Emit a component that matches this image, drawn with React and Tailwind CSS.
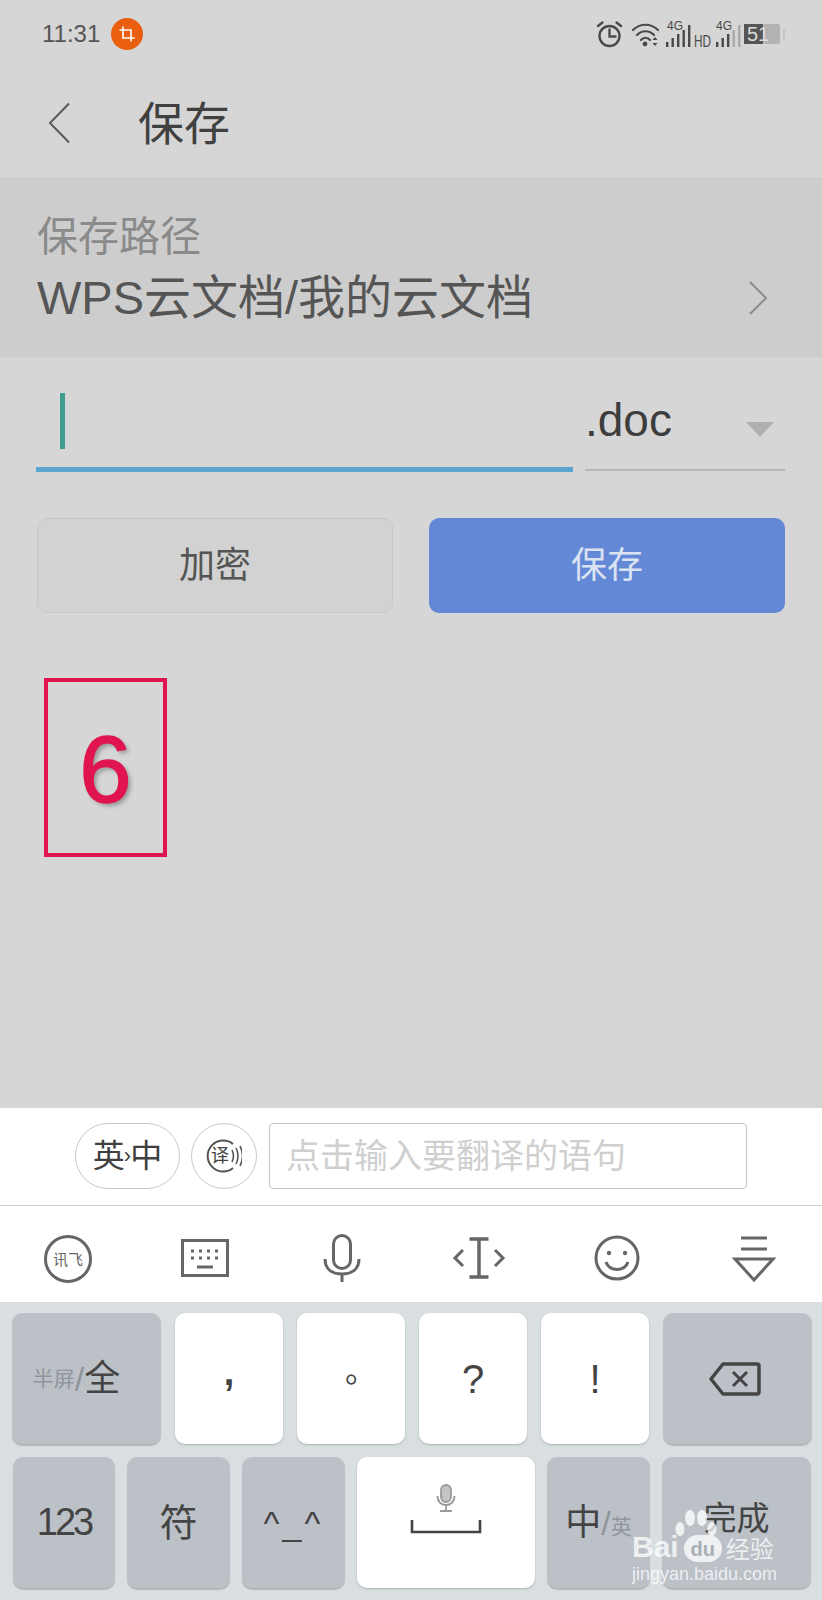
const SANS = "font-['Liberation_Sans','Noto_Sans_CJK_SC',sans-serif]";

function StatusIcons() {
  return (
    <svg width="195" height="34" viewBox="0 0 195 34" className="text-[#4a4a4a]">
      {/* alarm */}
      <g fill="none" stroke="currentColor" strokeWidth="2.4" strokeLinecap="round">
        <circle cx="14.500" cy="19" r="10" />
        <path d="M14.500 12.500v7h6" />
        <path d="M3 9l4.500-3.500M26 9l-4.500-3.500" />
      </g>
      {/* wifi */}
      <g fill="none" stroke="currentColor" strokeWidth="2.2" strokeLinecap="round">
        <path d="M38 13c7-7 18-7 25 0" />
        <path d="M42 18c5-5 12-5 17 0" />
        <path d="M46 23c2.500-3 6.500-3 9 0" />
      </g>
      <circle cx="50" cy="27" r="2.400" fill="currentColor" />
      <path d="M60 20l2.500 3h-5zM60 29l2.500-3h-5z" fill="currentColor" />
      {/* signal 1 */}
      <text x="72" y="13" fontSize="12" fill="currentColor" fontFamily="Liberation Sans">4G</text>
      <g fill="currentColor">
        <rect x="71" y="25" width="2.400" height="5" />
        <rect x="76.500" y="21" width="2.400" height="9" />
        <rect x="82" y="17" width="2.400" height="13" />
        <rect x="87.500" y="13" width="2.400" height="17" />
        <rect x="93" y="8" width="2.400" height="22" />
      </g>
      <text x="99" y="30" fontSize="16" fill="currentColor" fontFamily="Liberation Sans" textLength="17" lengthAdjust="spacingAndGlyphs">HD</text>
      {/* signal 2 */}
      <text x="121" y="13" fontSize="12" fill="currentColor" fontFamily="Liberation Sans">4G</text>
      <g fill="currentColor">
        <rect x="121" y="25" width="2.400" height="5" />
        <rect x="126.500" y="21" width="2.400" height="9" />
        <rect x="132" y="17" width="2.400" height="13" />
      </g>
      <g fill="#a9a9a9">
        <rect x="137.500" y="13" width="2.400" height="17" />
        <rect x="143" y="8" width="2.400" height="22" />
      </g>
      {/* battery */}
      <rect x="168" y="7" width="17" height="20" rx="2" fill="#b3b3b3" />
      <rect x="149" y="7" width="19" height="20" fill="#555555" />
      <rect x="188" y="12" width="2" height="10" fill="#c4c4c4" />
      <text x="152" y="24" fontSize="20" fill="#dddddd" fontFamily="Liberation Sans">51</text>
    </svg>
  );
}

function Key({ white, children, className = "" }) {
  return (
    <div
      className={`h-[131px] rounded-[10px] flex items-center justify-center text-[#444444] ${
        white
          ? "bg-white shadow-[0_1px_2px_rgba(0,0,0,0.2)]"
          : "bg-[#bbc1c7] shadow-[0_2px_1px_rgba(0,0,0,0.18)]"
      } ${className}`}
    >
      {children}
    </div>
  );
}

function ToolSlot({ children }) {
  return <div className="w-[48px] flex items-center justify-center">{children}</div>;
}

export default function App() {
  return (
    <div className={`relative w-[822px] h-[1600px] flex flex-col bg-[#d6d6d6] overflow-hidden ${SANS}`}>
      {/* status bar */}
      <div className="h-[68px] shrink-0 flex items-center pl-[42px] pr-[32px]">
        <span className="text-[24px] text-[#555555]">11:31</span>
        <div className="ml-[11px] w-[32px] h-[32px] rounded-full bg-[#ea5f0f] flex items-center justify-center">
          <svg width="16" height="16" viewBox="0 0 16 16" fill="none" stroke="#fff" strokeWidth="1.6">
            <path d="M4 0.5V12H15.5M0.5 4H12V15.5" />
          </svg>
        </div>
        <div className="ml-auto flex items-center">
          <StatusIcons />
        </div>
      </div>

      {/* title */}
      <div className="h-[110px] shrink-0 flex items-center pl-[47px] pt-[2px]">
        <svg width="24" height="42" viewBox="0 0 24 42" fill="none" stroke="#5a5a5a" strokeWidth="2" className="-mt-[3px]">
          <path d="M22 1.500L3 21L22 40.500" />
        </svg>
        <span className="ml-[67px] text-[46px] leading-none text-[#404040]">保存</span>
      </div>

      {/* save path */}
      <div className="h-[179px] shrink-0 bg-[#cdcdcd] border-t border-[#c6c6c6] pl-[37px] pr-[54px]">
        <div className="mt-[35px] text-[41px] leading-[46px] text-[#8a8a8a]">保存路径</div>
        <div className="mt-[9px] flex items-center justify-between">
          <span className="text-[47px] leading-[58px] text-[#555555]">WPS云文档/我的云文档</span>
          <svg width="20" height="34" viewBox="0 0 20 34" fill="none" stroke="#8c8c8c" strokeWidth="2">
            <path d="M2 1L18 17L2 33" />
          </svg>
        </div>
      </div>

      {/* file name */}
      <div className="flex pl-[36px] pr-[37px] mt-[36px] shrink-0">
        <div className="w-[537px] h-[79px] border-b-[5px] border-[#5ba6cf] pl-[24px]">
          <div className="w-[5px] h-[56px] bg-[#3f9c8f]" />
        </div>
        <div className="ml-[12px] w-[200px] h-[78px] border-b-2 border-[#b5b5b5] flex items-start justify-between pr-[11px]">
          <span className="text-[46px] leading-[54px] text-[#3d3d3d]">.doc</span>
          <div className="mt-[29px] w-0 h-0 border-x-[14px] border-x-transparent border-t-[15px] border-t-[#b0b0b0]" />
        </div>
      </div>

      {/* buttons */}
      <div className="flex gap-[36px] pl-[37px] mt-[46px] shrink-0">
        <div className="w-[356px] h-[95px] rounded-[10px] bg-[#d2d2d2] border border-[#c8c8c8] flex items-center justify-center text-[36px] text-[#555555]">
          加密
        </div>
        <div className="w-[356px] h-[95px] rounded-[10px] bg-[#6388d6] flex items-center justify-center text-[36px] text-[#dbe3f3]">
          保存
        </div>
      </div>

      {/* step marker */}
      <div className="ml-[44px] mt-[65px] w-[123px] h-[179px] shrink-0 border-[4px] border-[#e0144f] flex items-center justify-center pt-[4px]">
        <span className="text-[94px] leading-none text-[#e0144f] [-webkit-text-stroke:1.5px_#e0144f] [text-shadow:3px_3px_4px_rgba(0,0,0,0.3)]">6</span>
      </div>

      <div className="flex-1" />

      {/* translate bar */}
      <div className="h-[98px] shrink-0 bg-white border-b border-[#cfcfcf] flex items-start pt-[15px] pl-[75px]">
        <div className="w-[105px] h-[66px] rounded-full border border-[#c9c9c9] flex items-center justify-center text-[32px] leading-none text-[#404040]">
          英<span className="text-[22px] -mx-[1px]">›</span>中
        </div>
        <div className="ml-[11px] w-[66px] h-[66px] rounded-full border border-[#c9c9c9] flex items-center justify-center">
          <svg width="36" height="36" viewBox="0 0 36 36" fill="none" stroke="#555555">
            <path d="M27 6A15.500 15.500 0 1 0 27 30" strokeWidth="2" />
            <text x="5" y="24" fontSize="18" fill="#444444" stroke="none" fontFamily="Noto Sans CJK SC">译</text>
            <path d="M26 12c2 4 2 8 0 12M30 10c2.500 5 2.500 11 0 16M34 8c3 6 3 14 0 20" strokeWidth="1.600" />
          </svg>
        </div>
        <div className="ml-[12px] w-[478px] h-[66px] rounded-[4px] border border-[#c4c4c4] flex items-center pl-[16px] text-[34px] text-[#cfcfcf]">
          点击输入要翻译的语句
        </div>
      </div>

      {/* keyboard tools */}
      <div className="h-[96px] shrink-0 bg-white flex items-center justify-between px-[44px] pt-[8px]">
        <ToolSlot>
          <div className="w-[48px] h-[48px] shrink-0 mt-[2px] rounded-full border-[3px] border-[#666666] flex items-center justify-center text-[15px] leading-none text-[#666666] whitespace-nowrap">
            讯飞
          </div>
        </ToolSlot>
        <ToolSlot>
          <svg width="48" height="38" viewBox="0 0 48 38" fill="none" className="shrink-0">
            <rect x="1.500" y="1.500" width="45" height="35" stroke="#666666" strokeWidth="3" />
            <path d="M10 12h3M18 12h3M26 12h3M34 12h3M10 19h3M18 19h3M26 19h3M34 19h3" stroke="#666666" strokeWidth="3" />
            <path d="M16 28h16" stroke="#666666" strokeWidth="3" />
          </svg>
        </ToolSlot>
        <ToolSlot>
          <svg width="48" height="48" viewBox="0 0 48 48" fill="none" stroke="#666666" strokeWidth="3" className="shrink-0">
            <rect x="15.500" y="1.500" width="17" height="33" rx="8.500" />
            <path d="M7 25c0 11 8 15 17 15s17-4 17-15M24 40v8" />
          </svg>
        </ToolSlot>
        <ToolSlot>
          <svg width="54" height="42" viewBox="0 0 54 42" fill="none" stroke="#666666" strokeWidth="3" className="shrink-0 -ml-[2px]">
            <path d="M27 2v38M17.500 2h19M17.500 40h19" strokeWidth="3.500" />
            <path d="M11 13L3 21l8 8M43 13l8 8-8 8" />
          </svg>
        </ToolSlot>
        <ToolSlot>
          <svg width="46" height="46" viewBox="0 0 46 46" fill="none" stroke="#666666" strokeWidth="3" className="shrink-0">
            <circle cx="23" cy="23" r="21" />
            <circle cx="15" cy="18" r="2.200" fill="#666666" stroke="none" />
            <circle cx="31" cy="18" r="2.200" fill="#666666" stroke="none" />
            <path d="M12 27c3 10 19 10 22 0" />
          </svg>
        </ToolSlot>
        <ToolSlot>
          <svg width="44" height="46" viewBox="0 0 44 46" fill="none" stroke="#666666" strokeWidth="3" className="shrink-0 mt-[2px]">
            <path d="M9 2h26M9 13h26" />
            <path d="M3 23h38L22 44z" />
          </svg>
        </ToolSlot>
      </div>

      {/* keys */}
      <div className="h-[298px] shrink-0 bg-[#d9dfe1] pt-[11px] flex flex-col gap-[13px]">
        <div className="grid grid-cols-[149px_108px_108px_108px_108px_149px] gap-x-[14px] pl-[12px]">
          <Key className="pr-[20px]">
            <span className="text-[21px] text-[#8f959a]">半屏</span>
            <span className="text-[34px] leading-none text-[#8f959a] font-light">/</span>
            <span className="text-[36px] leading-none">全</span>
          </Key>
          <Key white><span className="text-[38px] font-bold leading-none -translate-y-[7px]">,</span></Key>
          <Key white><span className="text-[32px] leading-none translate-x-[10px] -translate-y-[8px]">。</span></Key>
          <Key white><span className="text-[40px] leading-none">?</span></Key>
          <Key white><span className="text-[40px] leading-none">!</span></Key>
          <Key className="pr-[6px]">
            <svg width="52" height="34" viewBox="0 0 52 34" fill="none" stroke="#444444" strokeWidth="3.500">
              <path d="M14 2h34a2 2 0 0 1 2 2v26a2 2 0 0 1-2 2H14L2 17z" strokeLinejoin="round" />
              <path d="M24 10l14 14M38 10L24 24" strokeWidth="3" />
            </svg>
          </Key>
        </div>
        <div className="grid grid-cols-[102px_103px_103px_178px_103px_149px] gap-x-[12px] pl-[13px]">
          <Key><span className="text-[38px] tracking-[-3px]">123</span></Key>
          <Key><span className="text-[38px] leading-none">符</span></Key>
          <Key><span className="text-[34px] leading-none tracking-[3px]">^_^</span></Key>
          <Key white className="flex-col pb-[28px]">
            <svg width="20" height="28" viewBox="0 0 20 28" fill="none" stroke="#9a9a9a" strokeWidth="1.800">
              <rect x="5" y="1" width="10" height="17" rx="5" fill="#c4c4c4" />
              <path d="M1.500 12c0 6 4 9 8.500 9s8.500-3 8.500-9M10 21v6M4 27h12" />
            </svg>
            <svg width="72" height="14" viewBox="0 0 72 14" fill="none" stroke="#444444" strokeWidth="2.600" className="mt-[8px]">
              <path d="M2 0v12h68V0" />
            </svg>
          </Key>
          <Key>
            <span className="text-[36px] leading-none">中</span>
            <span className="text-[34px] leading-none text-[#8f959a] font-light">/</span>
            <span className="text-[21px] text-[#8f959a] mt-[8px]">英</span>
          </Key>
          <Key><span className="text-[33px] leading-none mt-[-8px]">完成</span></Key>
        </div>
      </div>

      {/* baidu watermark */}
      <div className="absolute left-[630px] top-[1505px] w-[150px] h-[80px] text-white/75">
        <svg width="44" height="36" viewBox="0 0 44 36" className="absolute left-[44px] top-[5px]" fill="currentColor">
          <ellipse cx="6" cy="19" rx="4.500" ry="7" />
          <ellipse cx="16" cy="8" rx="5" ry="8" />
          <ellipse cx="28" cy="8" rx="5" ry="8" />
          <ellipse cx="38" cy="19" rx="4.500" ry="7" />
        </svg>
        <div className="absolute left-[2px] top-[27px] flex items-end font-bold leading-none whitespace-nowrap">
          <span className="text-[30px]">Bai</span>
          <span className="ml-[5px] w-[38px] h-[27px] rounded-[14px] bg-white/75 text-[20px] text-[#a9afb4] flex items-center justify-center">du</span>
          <span className="ml-[4px] text-[24px] font-normal">经验</span>
        </div>
        <div className="absolute left-[2px] top-[60px] text-[18px] leading-none whitespace-nowrap">jingyan.baidu.com</div>
      </div>
    </div>
  );
}
